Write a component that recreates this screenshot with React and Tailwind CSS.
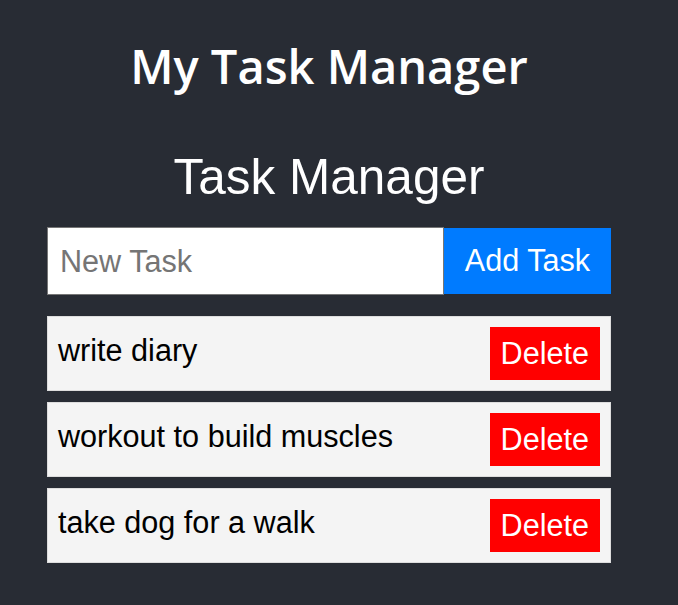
import React, { useState } from 'react';

const initialTasks = ['write diary', 'workout to build muscles', 'take dog for a walk'];

export default function App() {
  const [tasks, setTasks] = useState(initialTasks);
  const [text, setText] = useState('');

  const add = () => {
    if (!text.trim()) return;
    setTasks([...tasks, text.trim()]);
    setText('');
  };

  return (
    <div className="min-h-[605px] bg-[#282c34] pt-[36px] pb-10 font-['Liberation_Sans',Arial,sans-serif]">
      <div className="w-[564px] ml-[47px]">
        <h1 className="text-center text-white text-[47px] leading-[60px] font-semibold font-['Open_Sans',sans-serif]">My Task Manager</h1>
        <h2 className="mt-[53px] text-center text-white text-[49.5px] leading-[55px]">Task Manager</h2>
        <div className="mt-[23px] flex items-center">
          <input
            value={text}
            onChange={e => setText(e.target.value)}
            placeholder="New Task"
            className="flex-1 min-w-0 h-[68px] bg-white border border-[#767676] px-3 text-[30.6px] text-black placeholder:text-[#757575] outline-none"
          />
          <button onClick={add} className="shrink-0 w-[167px] h-[66px] bg-[#007bff] text-white text-[30.6px]">Add Task</button>
        </div>
        <ul className="mt-[21px] flex flex-col gap-[11px]">
          {tasks.map((t, i) => (
            <li key={i} className="h-[75px] bg-[#f4f4f4] border border-[#dddddd] p-[10px] flex justify-between items-start">
              <span className="text-[30.6px] text-black leading-[34px] mt-[6px]">{t}</span>
              <button
                onClick={() => setTasks(tasks.filter((_, j) => j !== i))}
                className="bg-[#ff0000] text-white text-[30.6px] leading-[35px] px-[11px] py-[9px]"
              >
                Delete
              </button>
            </li>
          ))}
        </ul>
      </div>
    </div>
  );
}
